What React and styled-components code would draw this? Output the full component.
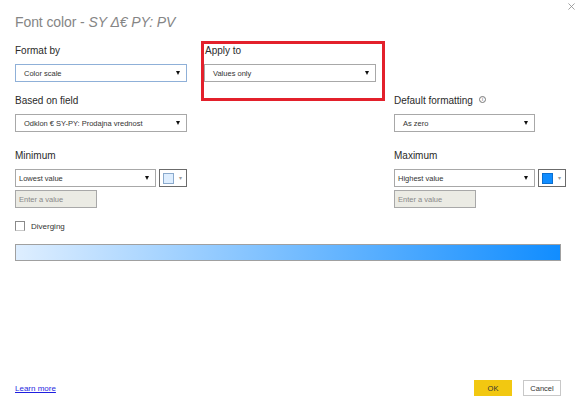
import styled, { createGlobalStyle } from 'styled-components';

const GlobalStyle = createGlobalStyle`
   html, body {
      margin: 0;
      padding: 0;
      background: #fff;
   }
   body {
      font-family: 'Segoe UI', 'Liberation Sans', Arial, sans-serif;
      color: #252423;
   }
`;

const Caret = () => <CaretShape />;

const Select = ({ value, width, inset = 8, focused }) => (
   <SelectBox $width={width} $inset={inset} $focused={focused}>
      <span>{value}</span>
      <Caret />
   </SelectBox>
);

const ColorPicker = ({ color, edge }) => (
   <ColorButton>
      <Swatch $color={color} $edge={edge} />
      <SmallCaret>▾</SmallCaret>
   </ColorButton>
);

const App = () => {
   return (
      <>
         <GlobalStyle />
         <Dialog>
            <CloseIcon viewBox='0 0 8 8'>
               <path d='M0.5 0.5 L7.5 7.5 M7.5 0.5 L0.5 7.5' stroke='#8a8a8a' strokeWidth='0.9' />
            </CloseIcon>
            <Title>
               Font color - <em>SY Δ€ PY: PV</em>
            </Title>

            <Row $top={14}>
               <Field>
                  <Label>Format by</Label>
                  <Select value='Color scale' width={172} focused />
               </Field>
               <Highlighted>
                  <Field>
                     <Label $shift={1}>Apply to</Label>
                     <Select value='Values only' width={172} />
                  </Field>
               </Highlighted>
               <div />
            </Row>

            <Row $top={13}>
               <Field>
                  <Label>Based on field</Label>
                  <Select value='Odklon € SY-PY: Prodajna vrednost' width={172} />
               </Field>
               <div />
               <Field>
                  <Label>
                     Default formatting <InfoIcon>i</InfoIcon>
                  </Label>
                  <Select value='As zero' width={141} />
               </Field>
            </Row>

            <Row $top={18}>
               <Field>
                  <Label>Minimum</Label>
                  <PickerLine>
                     <Select value='Lowest value' width={141} inset={3} />
                     <ColorPicker color='#deeeff' edge='#8aa9cc' />
                  </PickerLine>
                  <ValueInput>Enter a value</ValueInput>
               </Field>
               <div />
               <Field>
                  <Label>Maximum</Label>
                  <PickerLine>
                     <Select value='Highest value' width={141} inset={3} />
                     <ColorPicker color='#118dff' edge='#0b6fd0' />
                  </PickerLine>
                  <ValueInput>Enter a value</ValueInput>
               </Field>
            </Row>

            <CheckLine>
               <CheckBox />
               <span>Diverging</span>
            </CheckLine>

            <GradientBar />

            <Footer>
               <LearnMore href='#'>Learn more</LearnMore>
               <Actions>
                  <PrimaryButton>OK</PrimaryButton>
                  <SecondaryButton>Cancel</SecondaryButton>
               </Actions>
            </Footer>
         </Dialog>
      </>
   );
};

export default App;

const Dialog = styled.div`
   position: relative;
   box-sizing: border-box;
   width: 578px;
   height: 409px;
   padding: 13px 15px 0;
   display: flex;
   flex-direction: column;
   overflow: hidden;
`;

const CloseIcon = styled.svg`
   position: absolute;
   top: 3px;
   right: 3px;
   width: 7px;
   height: 7px;
`;

const Title = styled.h1`
   margin: 0;
   font-size: 14px;
   line-height: 18px;
   font-weight: 300;
   color: #858585;
   letter-spacing: -0.1px;

   em {
      font-style: italic;
   }
`;

const Row = styled.div`
   display: grid;
   grid-template-columns: 189px 190px 1fr;
   align-items: start;
   margin-top: ${(p) => p.$top}px;
`;

const Field = styled.div`
   display: flex;
   flex-direction: column;
   align-items: flex-start;
`;

const Label = styled.div`
   display: flex;
   align-items: center;
   gap: 4px;
   font-size: 10px;
   line-height: 12px;
   color: #2a2a2a;
   margin: 0 0 7px ${(p) => p.$shift || 0}px;
`;

const InfoIcon = styled.span`
   display: inline-flex;
   align-items: center;
   justify-content: center;
   box-sizing: border-box;
   width: 7px;
   height: 7px;
   border: 0.8px solid #777;
   border-radius: 50%;
   font-size: 5px;
   line-height: 1;
   color: #666;
   margin: -3px 0 0 2px;
`;

const Highlighted = styled.div`
   position: relative;

   &::before {
      content: '';
      position: absolute;
      top: -4px;
      left: -3px;
      right: 9px;
      bottom: -19px;
      border: 3px solid #e3202b;
      pointer-events: none;
   }
`;

const SelectBox = styled.div`
   box-sizing: border-box;
   width: ${(p) => p.$width}px;
   height: 18px;
   display: flex;
   align-items: center;
   justify-content: space-between;
   padding: 0 6px 0 ${(p) => p.$inset}px;
   background: #fff;
   border: 1px solid ${(p) => (p.$focused ? '#8fb0d8' : '#a8a8a8')};
   font-size: 7.5px;
   color: #333;
   white-space: nowrap;
`;

const CaretShape = styled.span`
   width: 0;
   height: 0;
   border-left: 2.5px solid transparent;
   border-right: 2.5px solid transparent;
   border-top: 4px solid #111;
`;

const PickerLine = styled.div`
   display: flex;
   gap: 3px;
   margin-bottom: 3px;
`;

const ColorButton = styled.div`
   box-sizing: border-box;
   width: 28px;
   height: 18px;
   display: flex;
   align-items: center;
   gap: 5px;
   padding-left: 3px;
   border: 1px solid #6b6b6b;
   background: #fff;
`;

const Swatch = styled.span`
   box-sizing: border-box;
   width: 11px;
   height: 11px;
   background: ${(p) => p.$color};
   border: 1px solid ${(p) => p.$edge};
`;

const SmallCaret = styled.span`
   font-size: 6px;
   line-height: 1;
   color: #999;
`;

const ValueInput = styled.div`
   box-sizing: border-box;
   width: 82px;
   height: 18px;
   display: flex;
   align-items: center;
   padding-left: 3px;
   background: #ebebe4;
   border: 1px solid #a8a8a8;
   font-size: 7.5px;
   color: #888;
`;

const CheckLine = styled.label`
   display: flex;
   align-items: center;
   gap: 6px;
   margin-top: 13px;
   font-size: 8px;
   color: #333;
`;

const CheckBox = styled.span`
   box-sizing: border-box;
   width: 10px;
   height: 10px;
   border: 1px solid #8a8a8a;
   border-bottom-color: #c8c8c8;
   background: #fff;
`;

const GradientBar = styled.div`
   box-sizing: border-box;
   width: 546px;
   height: 17px;
   margin-top: 13px;
   border: 1px solid #a0a0a0;
   background: linear-gradient(to right, #deeeff, #118dff);
`;

const Footer = styled.div`
   display: flex;
   align-items: center;
   justify-content: space-between;
   width: 546px;
   margin-top: auto;
   margin-bottom: 13px;
`;

const LearnMore = styled.a`
   font-size: 8px;
   color: #1f1fe0;
   text-decoration: underline;
`;

const Actions = styled.div`
   display: flex;
   gap: 11px;
`;

const PrimaryButton = styled.button`
   box-sizing: border-box;
   width: 38px;
   height: 16px;
   padding: 0;
   border: none;
   background: #f2c811;
   font-family: inherit;
   font-size: 7.5px;
   color: #333;
`;

const SecondaryButton = styled.button`
   box-sizing: border-box;
   width: 38px;
   height: 16px;
   padding: 0;
   border: 1px solid #c8c8c8;
   background: #fff;
   font-family: inherit;
   font-size: 7.5px;
   color: #333;
`;
